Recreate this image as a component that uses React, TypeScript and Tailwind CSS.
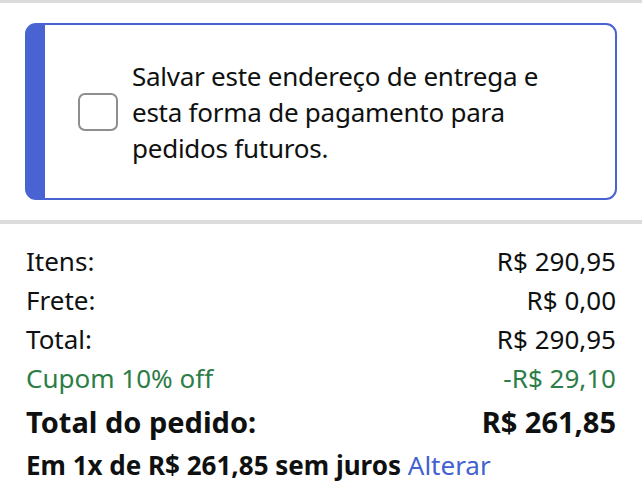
import React from "react";

export default function App() {
  const font = { fontFamily: '"Noto Sans", "Open Sans", sans-serif' };
  return (
    <div className="w-[642px] h-[500px] bg-white overflow-hidden" style={font}>
      <div className="h-[3px] bg-[#dcdcdc]" />
      <div className="px-[25px] pt-[20px]">
        <div className="flex h-[177px] rounded-[11px] border-2 border-[#4a63d3] border-l-[20px] bg-white">
          <div className="flex items-center pl-[33px] pr-4">
            <div className="w-[40px] h-[38px] shrink-0 rounded-[7px] border-2 border-[#8e8e8e] bg-white" />
            <div className="ml-[14px] text-[26px] leading-[36px] text-[#0f1111] tracking-[-0.25px]">
              Salvar este endereço de entrega e
              <br />
              esta forma de pagamento para
              <br />
              pedidos futuros.
            </div>
          </div>
        </div>
      </div>
      <div className="mt-[20px] h-[4px] bg-[#dcdcdc]" />
      <div className="pl-[26px] pr-[26px] pt-[18px] text-[26px] text-[#0f1111]">
        <div className="flex justify-between leading-[39px]">
          <span>Itens:</span>
          <span>R$ 290,95</span>
        </div>
        <div className="flex justify-between leading-[39px]">
          <span>Frete:</span>
          <span>R$ 0,00</span>
        </div>
        <div className="flex justify-between leading-[39px]">
          <span>Total:</span>
          <span>R$ 290,95</span>
        </div>
        <div className="flex justify-between leading-[39px] text-[#2d7d47]">
          <span>Cupom 10% off</span>
          <span>-R$ 29,10</span>
        </div>
        <div className="flex justify-between leading-[47px] text-[29px] font-bold">
          <span>Total do pedido:</span>
          <span>R$ 261,85</span>
        </div>
        <div className="leading-[41px] text-[26px] font-bold whitespace-nowrap">
          Em 1x de R$ 261,85 sem juros{" "}
          <span className="font-normal text-[#4262cf]">Alterar</span>
        </div>
      </div>
    </div>
  );
}
